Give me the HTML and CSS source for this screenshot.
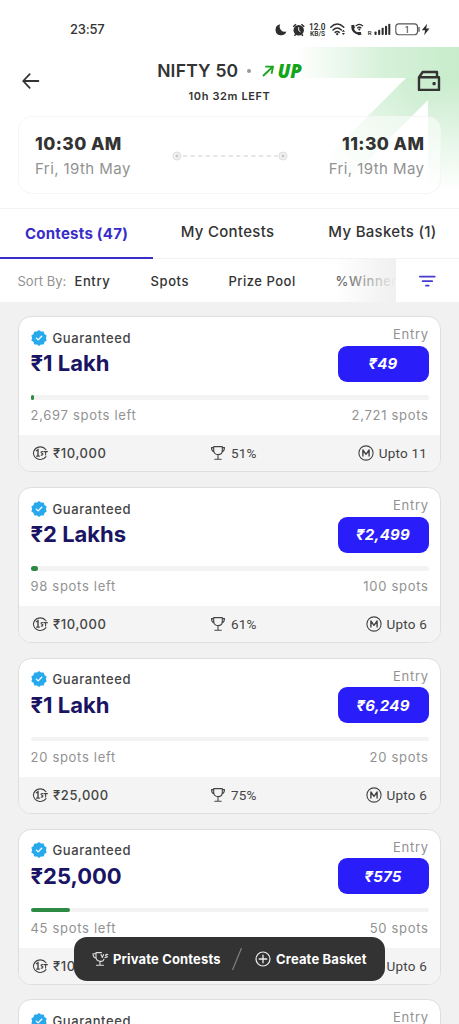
FILE: index.html
```html
<!DOCTYPE html>
<html lang="en">
<head>
<meta charset="utf-8">
<title>NIFTY 50 Contests</title>
<link rel="stylesheet" href="styles.css">
</head>
<body>
<svg class="defs" aria-hidden="true">
  <symbol id="verified" viewBox="0 0 16 16">
    <path fill="#28a9ee" stroke="#28a9ee" stroke-width="1.4" stroke-linejoin="round" d="M8 .9 9.8 2.3 12.2 2.2 12.9 4.5 14.9 5.8 14.1 8 14.9 10.2 12.9 11.5 12.2 13.8 9.8 13.7 8 15.1 6.2 13.7 3.8 13.8 3.1 11.5 1.1 10.2 1.9 8 1.1 5.8 3.1 4.5 3.8 2.2 6.2 2.3Z"/>
    <path fill="none" stroke="#fff" stroke-width="1.3" stroke-linecap="round" stroke-linejoin="round" d="m5.3 8.1 1.9 1.8 3.5-3.6"/>
  </symbol>
  <symbol id="first" viewBox="0 0 16 16">
    <path fill="none" stroke="#444" stroke-width="1.1" stroke-linecap="round" d="M14 4.8A7 7 0 0 0 1.4 8 7 7 0 0 0 14 11.6"/>
    <path fill="none" stroke="#444" stroke-width="1.4" d="M4 6 6 4.7V11.4M4.2 11.1H7.8"/>
    <path fill="none" stroke="#444" stroke-width="1.1" d="M11 6.7C9 6 8.4 7.9 10 8.3S10.8 10.7 8.8 9.9M11.4 6.6H15.8M13.6 6.6V10.6"/>
  </symbol>
  <symbol id="trophy" viewBox="0 0 16 16">
    <path fill="none" stroke="#444" stroke-width="1.1" stroke-linecap="round" stroke-linejoin="round" d="M3.7 1.6H12.3V5.5C12.3 11 3.7 11 3.7 5.5ZM3.4 2.6H1.5C1.5 5.2 2.3 6.4 4.1 7M12.6 2.6H14.5C14.5 5.2 13.7 6.4 11.9 7M8 9.7V14M4.8 14.2H11.2"/>
  </symbol>
  <symbol id="multi" viewBox="0 0 16 16">
    <circle cx="8" cy="8" r="7.1" fill="none" stroke="#444" stroke-width="1.1"/>
    <path fill="none" stroke="#444" stroke-width="1.4" stroke-linejoin="round" d="M4.9 11.4V5L8 9.3 11.1 5V11.4"/>
  </symbol>
</svg>

<div class="screen">
  <header class="header">
    <svg class="backdrop" width="170" height="160" viewBox="0 0 170 160" aria-hidden="true">
      <defs>
        <linearGradient id="band"><stop offset="0" stop-color="#c8eccc" stop-opacity="0"/><stop offset=".55" stop-color="#c8eccc" stop-opacity=".75"/><stop offset="1" stop-color="#c8eccc"/></linearGradient>
        <linearGradient id="shaft" gradientUnits="userSpaceOnUse" x1="140" y1="31" x2="42" y2="129"><stop offset="0" stop-color="#c8eccc"/><stop offset="1" stop-color="#c8eccc" stop-opacity="0"/></linearGradient>
        <linearGradient id="side" x2="0" y2="1"><stop offset="0" stop-color="#c8eccc"/><stop offset="1" stop-color="#c8eccc" stop-opacity="0"/></linearGradient>
      </defs>
      <path fill="url(#band)" d="M8 0H170V31H8Z"/>
      <path fill="url(#shaft)" d="M117 31H139V53L32 160H0V148Z"/>
      <path fill="url(#side)" d="M139 31H170V145H139Z"/>
    </svg>

    <div class="status">
      <span class="clock">23:57</span>
      <svg width="158" height="20" viewBox="272 20 158 20" aria-hidden="true">
        <g fill="#2e2e2e">
          <path d="M280.2 24.2A5.6 5.6 0 1 0 286.4 31.6 5.3 5.3 0 0 1 280.2 24.2Z"/>
          <circle cx="298.7" cy="30.2" r="5.2"/>
          <path d="M293.2 26.8 296 24.2M304.2 26.8 301.4 24.2M295.7 34.3 294.5 35.7M301.7 34.3 302.9 35.7" stroke="#2e2e2e" stroke-width="1.5"/>
          <path d="M298.7 27.2V30.5L300.5 31.9" fill="none" stroke="#fff"/>
          <text x="309" y="30" class="net" font-size="8.4" textLength="16.5" lengthAdjust="spacingAndGlyphs">12.0</text>
          <text x="310" y="36.3" class="net" font-size="6.4" textLength="15" lengthAdjust="spacingAndGlyphs">KB/S</text>
          <path fill="none" stroke="#2e2e2e" stroke-width="1.5" stroke-linecap="round" d="M330.8 27.2Q337.2 20.7 343.8 27.2M333 30Q337.2 25.8 341.4 30M335.2 32.4Q337.2 30.6 339.2 32.4"/>
          <circle cx="337.2" cy="34.2" r="1.1"/>
          <path d="M341.8 31.8 343.4 29.8 345 31.8ZM341.8 33 343.4 35 345 33Z"/>
          <path fill="none" stroke="#2e2e2e" stroke-width="2.1" d="M352.6 25.5C351.5 30 355.5 34.3 360.2 33.5"/>
          <path d="M351.3 25.2 354.1 24.8 355 27.9 353 29ZM357.5 32.1 360.9 32 361.4 34.7 358 35.2Z"/>
          <path fill="none" stroke="#2e2e2e" stroke-width="1.2" d="M355.6 26.2Q359.3 22.5 363 26.2M357.3 28.2Q359.3 26.3 361.3 28.2"/>
          <circle cx="359.3" cy="29.6" r="1"/>
          <text x="367.8" y="34.7" class="net" font-size="6">R</text>
          <rect x="374.5" y="31.5" width="2.1" height="3.5" rx=".8"/><rect x="378.1" y="29.7" width="2.1" height="5.3" rx=".8"/><rect x="381.6" y="27.8" width="2.1" height="7.2" rx=".8"/><rect x="385" y="25.8" width="2.1" height="9.2" rx=".8"/><rect x="388.3" y="23.7" width="2" height="11.3" rx=".8"/>
          <rect x="395.8" y="23.9" width="21.7" height="10.8" rx="3" fill="none" stroke="#555" stroke-width="1.1"/>
          <path d="M419 27V31.8" stroke="#555" stroke-width="1.3"/>
          <text x="404.6" y="32.6" font-size="9" class="net light">1</text>
          <path d="M427.1 23.8 421.8 30.3H425.1L424.2 35.3 429.5 28.6H426.2Z"/>
        </g>
      </svg>
    </div>

    <div class="topbar">
      <svg class="back" width="20" height="18" viewBox="0 0 20 18"><path d="M17.4 9H2.2M8.7 2.2 2.2 9 8.7 15.8" fill="none" stroke="#333" stroke-width="1.8" stroke-linecap="round" stroke-linejoin="round"/></svg>
      <div class="heading">
        <h1 class="title"><span class="index">NIFTY 50</span><i class="dot"></i><svg width="13" height="12" viewBox="0 0 13 12"><path d="M1 11 10.5 2M3.3 1.6H11L9.6 8.8" fill="none" stroke="#18a51d" stroke-width="1.8"/></svg><em class="up">UP</em></h1>
        <p class="left">10h 32m LEFT</p>
      </div>
      <svg class="wallet" width="24" height="22" viewBox="0 0 24 22"><path d="M2 7.3H22V19.9H2ZM2.2 7 5.7 2H20V7" fill="none" stroke="#333" stroke-width="2.4" stroke-linejoin="round"/><rect x="15.5" y="12" width="3.2" height="3.2" rx="1" fill="#333"/></svg>
    </div>

    <div class="times">
      <div class="time"><b>10:30 AM</b><span>Fri, 19th May</span></div>
      <svg width="116" height="10" viewBox="0 0 116 10"><g fill="#f2f2f2" stroke="#dedede"><circle cx="5" cy="5" r="4"/><circle cx="111" cy="5" r="4"/></g><circle cx="5" cy="5" r="1.5" fill="#c8c8c8"/><circle cx="111" cy="5" r="1.5" fill="#c8c8c8"/><path d="M11 5H106" stroke="#dedede" stroke-width="1.3" stroke-dasharray="4.2 3.4"/></svg>
      <div class="time end"><b>11:30 AM</b><span>Fri, 19th May</span></div>
    </div>
  </header>

  <nav class="tabs">
    <span class="tab active">Contests (47)</span>
    <span class="tab mine">My Contests</span>
    <span class="tab">My Baskets (1)</span>
  </nav>

  <div class="sort">
    <div class="options">
      <span class="label">Sort By:</span><span class="entry">Entry</span><span class="spots-sort">Spots</span><span class="pool">Prize Pool</span><span class="winners">%Winners</span>
    </div>
    <div class="filter"><svg width="17" height="12" viewBox="0 0 17 12"><path d="M.8 1.6H15.8M3.6 6.2H13.2M6.9 10.6H9.7" stroke="#463bd0" stroke-width="1.7" stroke-linecap="round"/></svg></div>
  </div>

  <main class="list">
    <article class="card">
      <div class="body">
        <div class="offer">
          <div><p class="guaranteed"><svg class="badge"><use href="#verified"/></svg>Guaranteed</p><h2 class="amount">₹1 Lakh</h2></div>
          <div class="buy"><span class="caption">Entry</span><button class="price">₹49</button></div>
        </div>
        <div class="track"><i class="fill" style="width:1%"></i></div>
        <div class="spots"><span>2,697 spots left</span><span>2,721 spots</span></div>
      </div>
      <footer class="foot"><span class="first"><svg><use href="#first"/></svg>₹10,000</span><span class="chance"><svg><use href="#trophy"/></svg>51%</span><span class="upto"><svg><use href="#multi"/></svg>Upto 11</span></footer>
    </article>

    <article class="card">
      <div class="body">
        <div class="offer">
          <div><p class="guaranteed"><svg class="badge"><use href="#verified"/></svg>Guaranteed</p><h2 class="amount">₹2 Lakhs</h2></div>
          <div class="buy"><span class="caption">Entry</span><button class="price">₹2,499</button></div>
        </div>
        <div class="track"><i class="fill" style="width:2%"></i></div>
        <div class="spots"><span>98 spots left</span><span>100 spots</span></div>
      </div>
      <footer class="foot"><span class="first"><svg><use href="#first"/></svg>₹10,000</span><span class="chance"><svg><use href="#trophy"/></svg>61%</span><span class="upto"><svg><use href="#multi"/></svg>Upto 6</span></footer>
    </article>

    <article class="card">
      <div class="body">
        <div class="offer">
          <div><p class="guaranteed"><svg class="badge"><use href="#verified"/></svg>Guaranteed</p><h2 class="amount">₹1 Lakh</h2></div>
          <div class="buy"><span class="caption">Entry</span><button class="price">₹6,249</button></div>
        </div>
        <div class="track"></div>
        <div class="spots"><span>20 spots left</span><span>20 spots</span></div>
      </div>
      <footer class="foot"><span class="first"><svg><use href="#first"/></svg>₹25,000</span><span class="chance"><svg><use href="#trophy"/></svg>75%</span><span class="upto"><svg><use href="#multi"/></svg>Upto 6</span></footer>
    </article>

    <article class="card">
      <div class="body">
        <div class="offer">
          <div><p class="guaranteed"><svg class="badge"><use href="#verified"/></svg>Guaranteed</p><h2 class="amount">₹25,000</h2></div>
          <div class="buy"><span class="caption">Entry</span><button class="price">₹575</button></div>
        </div>
        <div class="track"><i class="fill" style="width:10%"></i></div>
        <div class="spots"><span>45 spots left</span><span>50 spots</span></div>
      </div>
      <footer class="foot"><span class="first"><svg><use href="#first"/></svg>₹10</span><span class="upto"><svg><use href="#multi"/></svg>Upto 6</span></footer>
    </article>

    <article class="card">
      <div class="body">
        <div class="offer">
          <div><p class="guaranteed"><svg class="badge"><use href="#verified"/></svg>Guaranteed</p></div>
          <div class="buy"><span class="caption">Entry</span></div>
        </div>
      </div>
    </article>
  </main>

  <div class="dock">
    <svg class="dock-trophy" width="17" height="16" viewBox="0 0 17 16"><path d="M9.5 1.6H4V6C4 11.2 11.4 11.6 12 8M3.8 2.8H1C1 5.4 2 6.8 4.4 7.2M8 10V14M4.5 14.2H11.5M9 3.5 10.3 6.5 11.6 3.5M15.8 3.5C13.3 2.8 12.9 4.8 14.5 5S15.3 7 12.9 6.3" fill="none" stroke="#ddd" stroke-width="1.1" stroke-linecap="round" stroke-linejoin="round"/></svg>
    <span class="private">Private Contests</span>
    <svg class="slash" width="12" height="24" viewBox="0 0 12 24"><path d="M1.5 23 10.5 1" stroke="#858585" stroke-width="1.1"/></svg>
    <svg width="16" height="16" viewBox="0 0 16 16"><path d="M8 4.2V11.8M4.2 8H11.8" stroke="#eee" stroke-width="1.3" stroke-linecap="round"/><circle cx="8" cy="8" r="7" fill="none" stroke="#eee" stroke-width="1.2"/></svg>
    <span class="create">Create Basket</span>
  </div>
</div>
</body>
</html>
```
FILE: styles.css
```css
* { box-sizing: border-box; }
body { margin: 0; font-family: Inter, "Noto Sans", sans-serif; color: #333; }
h1, h2, p { margin: 0; }
svg { display: block; flex: none; }
.defs { position: absolute; width: 0; height: 0; }
.screen { position: relative; width: 459px; height: 1024px; overflow: hidden; background: #f1f1f1; display: flex; flex-direction: column; }

.header { position: relative; flex: none; height: 208px; background: #fff; }
.backdrop { position: absolute; right: 0; top: 47px; }
.status { position: relative; height: 47px; padding: 20px 29px 0 70px; display: flex; justify-content: space-between; }
.clock { font-size: 13px; line-height: 19px; font-weight: 500; letter-spacing: -.2px; }
.net { font-family: Roboto, sans-serif; font-weight: 600; }
.light { font-weight: 400; }
.topbar { position: relative; height: 69px; padding: 0 18px 0 21px; display: flex; justify-content: space-between; }
.back { margin-top: 25px; }
.wallet { margin-top: 23px; }
.heading { padding-top: 12.5px; margin-left: 1px; display: flex; flex-direction: column; align-items: center; }
.title { display: flex; align-items: center; height: 22px; font-size: 17.5px; font-weight: 600; }
.index { letter-spacing: .2px; }
.dot { width: 4px; height: 4px; border-radius: 50%; background: #999; margin: 0 11px 0 9px; }
.up { font-family: "Open Sans", sans-serif; color: #12a518; font-size: 18.5px; font-weight: 800; margin-left: 2px; }
.left { font-size: 11px; line-height: 16px; font-weight: 600; letter-spacing: .62px; margin-top: 6px; }
.times { position: relative; margin: 0 18px; height: 78px; border: 1px solid #f5f5f5; border-radius: 14px; background: rgba(255,255,255,.5); padding: 16px 16px 0; display: flex; justify-content: space-between; }
.times > svg { margin-top: 18px; }
.time { display: flex; flex-direction: column; }
.time b { font-size: 17.5px; line-height: 22px; font-weight: 800; letter-spacing: .42px; margin-right: -.4px; }
.time span { font-size: 15px; line-height: 20px; letter-spacing: .42px; margin-right: -.4px; color: #929292; margin-top: 4px; }
.end { align-items: flex-end; }

.tabs { flex: none; height: 51px; background: #fff; border-top: 1px solid #f3f3f3; border-bottom: 1px solid #f3f3f3; display: grid; grid-template-columns: repeat(3, 153px); text-align: center; }
.tab { height: 50px; font-size: 15px; line-height: 46px; font-weight: 500; letter-spacing: .3px; }
.active { color: #382dc9; font-weight: 700; border-bottom: 2px solid #382dc9; line-height: 49px; letter-spacing: .25px; }
.mine { padding-right: 4px; }

.sort { flex: none; height: 43px; background: #fff; display: flex; font-size: 13px; line-height: 45px; font-weight: 500; letter-spacing: .6px; }
.options { position: relative; width: 396px; padding-left: 17.5px; display: flex; overflow: hidden; white-space: nowrap; }
.options::after { content: ""; position: absolute; right: 0; top: 0; width: 62px; height: 43px; background: linear-gradient(90deg, rgba(245,245,245,0), #f0f0f0); }
.options span { flex: none; }
.label { width: 57px; color: #929292; font-weight: 400; letter-spacing: 0; }
.entry { width: 76px; }
.spots-sort { width: 78px; }
.pool { width: 107px; letter-spacing: .5px; }
.winners { color: #555; }
.filter { flex: 1; display: flex; align-items: center; justify-content: center; }

.list { padding: 14.4px 18px 0; display: flex; flex-direction: column; gap: 14.75px; }
.card { flex: none; height: 156px; background: #fff; border: 1px solid #dedede; border-radius: 13px; overflow: hidden; display: flex; flex-direction: column; }
.body { height: 118px; padding: 8px 11.5px 0; }
.offer { height: 70px; display: flex; justify-content: space-between; }
.guaranteed { height: 25px; display: flex; align-items: center; font-size: 13px; font-weight: 500; letter-spacing: .58px; color: #444; }
.badge { width: 16px; height: 16px; margin-right: 6px; }
.amount { color: #1a1464; font-size: 22px; line-height: 27px; font-weight: 700; letter-spacing: 0; }
.buy { width: 91px; display: flex; flex-direction: column; }
.caption { text-align: right; color: #929292; font-size: 13px; line-height: 19px; letter-spacing: .7px; margin-right: -.2px; }
.price { height: 36px; margin-top: 1.5px; padding: 0; border: 0; border-radius: 9px; background: #291ef9; color: #fff; font: italic 700 15px Inter, "Noto Sans", sans-serif; letter-spacing: .2px; }
.track { height: 4.5px; border-radius: 3px; background: #f3f3f3; display: flex; }
.fill { border-radius: 3px; background: #2c8a45; }
.spots { margin-top: 5.5px; margin-right: -.1px; display: flex; justify-content: space-between; color: #929292; font-size: 13px; line-height: 20px; letter-spacing: .7px; }
.foot { flex: 1; background: #f4f4f4; padding: 0 13px 0 13px; display: grid; grid-template-columns: 178px 1fr auto; align-items: center; font-size: 13px; font-weight: 500; letter-spacing: .6px; color: #444; }
.foot span { display: flex; align-items: center; }
.foot svg { width: 16px; height: 16px; margin-right: 5px; }
.foot .chance { font: 400 13.5px Roboto, sans-serif; letter-spacing: .15px; }
.foot .upto { grid-column: 3; font: 400 13.5px Roboto, sans-serif; letter-spacing: .2px; }

.dock { position: absolute; left: 74px; top: 937px; width: 311px; height: 44px; border-radius: 13px; background: #333; color: #fff; padding-left: 18px; display: flex; align-items: center; font-size: 13px; font-weight: 700; letter-spacing: .15px; white-space: nowrap; }
.private { width: 118px; margin-left: 4px; }
.slash { margin-right: 12px; }
.create { margin-left: 5px; }
```
